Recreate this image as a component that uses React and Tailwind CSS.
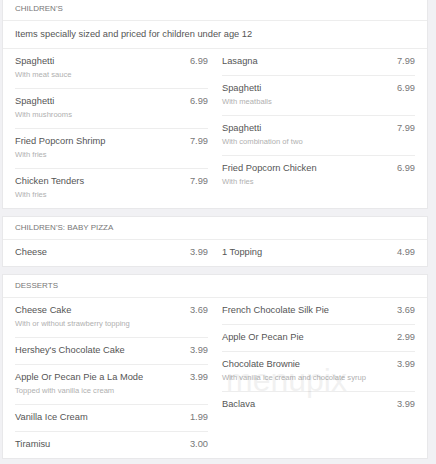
import React from "react";

const F = { fontFamily: '"Liberation Sans", Arial, sans-serif' };

function Item({ name, price, desc, last }) {
  return (
    <div className={`flex flex-col pt-[6px] pb-[7px] ${last ? "" : "border-b border-[#ededed]"}`}>
      <div className="flex justify-between items-center h-[13px] text-[9.3px] text-[#555]">
        <span>{name}</span>
        <span className="text-[#777]">{price}</span>
      </div>
      {desc && (
        <div className="h-[13px] flex items-center text-[7.6px] text-[#b0b0b0]">{desc}</div>
      )}
    </div>
  );
}

function Card({ title, note, left, right }) {
  return (
    <div className="bg-white border border-[#e8e8ea]">
      <div className="h-[23px] flex items-center px-[12px] text-[8px] text-[#777] border-b border-[#ededed]">
        {title}
      </div>
      {note && (
        <div className="h-[28px] flex items-center px-[12px] text-[9.3px] text-[#555] border-b border-[#ededed]">
          {note}
        </div>
      )}
      <div className="grid grid-cols-2 gap-x-[14px] px-[12px]">
        <div className="flex flex-col">
          {left.map((it, i) => (
            <Item key={i} {...it} last={i === left.length - 1} />
          ))}
        </div>
        <div className="flex flex-col">
          {right.map((it, i) => (
            <Item key={i} {...it} last={i === right.length - 1} />
          ))}
        </div>
      </div>
    </div>
  );
}

export default function App() {
  return (
    <div style={F} className="relative w-[436px] h-[464px] bg-[#f1f1f4] overflow-hidden">
      <div className="pl-[2px] pr-[8px] flex flex-col gap-[7px] -mt-[3px]">
        <Card
          title="CHILDREN'S"
          note="Items specially sized and priced for children under age 12"
          left={[
            { name: "Spaghetti", price: "6.99", desc: "With meat sauce" },
            { name: "Spaghetti", price: "6.99", desc: "With mushrooms" },
            { name: "Fried Popcorn Shrimp", price: "7.99", desc: "With fries" },
            { name: "Chicken Tenders", price: "7.99", desc: "With fries" },
          ]}
          right={[
            { name: "Lasagna", price: "7.99" },
            { name: "Spaghetti", price: "6.99", desc: "With meatballs" },
            { name: "Spaghetti", price: "7.99", desc: "With combination of two" },
            { name: "Fried Popcorn Chicken", price: "6.99", desc: "With fries" },
          ]}
        />
        <Card
          title="CHILDREN'S: BABY PIZZA"
          left={[{ name: "Cheese", price: "3.99" }]}
          right={[{ name: "1 Topping", price: "4.99" }]}
        />
        <Card
          title="DESSERTS"
          left={[
            { name: "Cheese Cake", price: "3.69", desc: "With or without strawberry topping" },
            { name: "Hershey's Chocolate Cake", price: "3.99" },
            { name: "Apple Or Pecan Pie a La Mode", price: "3.99", desc: "Topped with vanilla ice cream" },
            { name: "Vanilla Ice Cream", price: "1.99" },
            { name: "Tiramisu", price: "3.00" },
          ]}
          right={[
            { name: "French Chocolate Silk Pie", price: "3.69" },
            { name: "Apple Or Pecan Pie", price: "2.99" },
            { name: "Chocolate Brownie", price: "3.99", desc: "With vanilla ice cream and chocolate syrup" },
            { name: "Baclava", price: "3.99" },
          ]}
        />
      </div>
      <div className="absolute left-[226px] top-[364px] text-[32px] leading-none text-[#000] opacity-[0.05] pointer-events-none">
        menupix
      </div>
    </div>
  );
}
